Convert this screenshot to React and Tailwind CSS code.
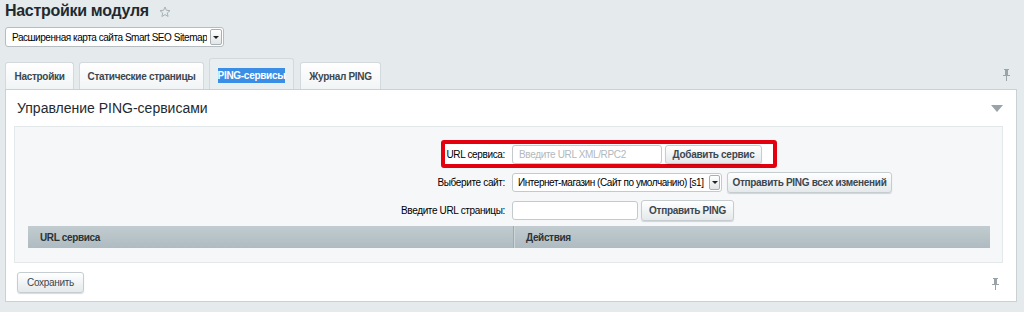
import React from "react";

const font = "font-['Liberation_Sans',Arial,sans-serif]";

function Btn({ children, className = "" }) {
  return (
    <button
      className={`flex items-center justify-center rounded-[3px] border border-[#c6cdd1] bg-gradient-to-b from-white to-[#e4e9eb] text-[10px] font-bold tracking-[-0.3px] text-[#3c474f] shadow-[0_1px_1px_rgba(0,0,0,0.15)] ${className}`}
    >
      {children}
    </button>
  );
}

function Arrow({ className = "" }) {
  return (
    <span
      className={`flex shrink-0 items-center justify-center rounded-[2px] border border-[#a8b0b4] bg-gradient-to-b from-white to-[#e2e6e8] ${className}`}
    >
      <svg width="6" height="3" viewBox="0 0 6 3">
        <path d="M0 0h6L3 3z" fill="#222" />
      </svg>
    </span>
  );
}

function Tab({ children, active, className = "" }) {
  return (
    <div
      className={`flex items-center justify-center rounded-t-[3px] border border-b-0 border-[#d3d9dc] text-[10px] font-bold tracking-[-0.3px] text-[#3c474f] ${
        active ? "h-[31px] bg-[#e9eef0] pt-[2px]" : "h-[27px] bg-gradient-to-b from-white to-[#f1f4f5]"
      } ${className}`}
    >
      {children}
    </div>
  );
}

export default function App() {
  return (
    <div className={`relative h-[312px] w-[1024px] overflow-hidden whitespace-nowrap bg-[#e5ebed] ${font}`}>
      <div className="flex h-[22px] items-center gap-[10px] pl-[5px]">
        <h1 className="text-[16px] font-bold leading-none tracking-[-0.3px] text-[#1f2a30]">Настройки модуля</h1>
        <svg width="12" height="12" viewBox="0 0 24 24" className="mt-[2px]">
          <path
            d="M12 2l2.9 6.6 7.1.6-5.4 4.7 1.6 7L12 17.3 5.8 21l1.6-7L2 9.2l7.1-.6z"
            fill="none"
            stroke="#a9b1b5"
            strokeWidth="2"
            strokeLinejoin="round"
          />
        </svg>
      </div>

      <div className="ml-[5px] mt-[5px] flex h-[20px] w-[219px] items-center justify-between rounded-[3px] border border-[#b5bdc1] bg-white pl-[6px] pr-[1px] text-[10px] tracking-[-0.45px] text-black">
        <span className="overflow-hidden">Расширенная карта сайта Smart SEO Sitemap</span>
        <Arrow className="ml-[2px] h-[16px] w-[12px]" />
      </div>

      <div className="mt-[11px] flex items-end pl-[5px] pr-[14px]">
        <Tab className="w-[69px]">Настройки</Tab>
        <Tab className="ml-[5px] w-[125px]">Статические страницы</Tab>
        <Tab active className="ml-[5px] w-[85px]">
          <span className="bg-[#3a8ee6] text-white">PING-сервисы</span>
        </Tab>
        <Tab className="ml-[6px] w-[81px]">Журнал PING</Tab>
        <div className="mb-[8px] ml-auto">
          <svg width="7" height="12" viewBox="0 0 7 12">
            <path d="M1 0h5v1H5v5h2v1H4v5H3V7H0V6h2V1H1z" fill="#9aa3a8" />
          </svg>
        </div>
      </div>

      <div className="ml-[5px] flex h-[213px] w-[1012px] flex-col border border-[#c9d1d4] bg-white">
        <div className="flex h-[36px] items-center justify-between pl-[11px] pr-[13px]">
          <span className="text-[14px] text-[#1f2a30]">Управление PING-сервисами</span>
          <svg width="12" height="7" viewBox="0 0 12 7">
            <path d="M0 0h12L6 7z" fill="#9aa3a8" />
          </svg>
        </div>

        <div className="ml-[8px] mr-[13px] flex h-[137px] flex-col border border-[#e3e8ea] bg-[#f5f7f8] pt-[13px] text-[10px] tracking-[-0.35px] text-black">
          <div className="relative flex h-[28px] items-center">
            <div className="absolute left-[426px] top-0 h-[28px] w-[336px] rounded-[3px] border-[4px] border-[#e3000f] bg-white" />
            <span className="relative w-[491px] pr-[1px] text-right">URL сервиса:</span>
            <div className="relative ml-[6px] flex h-[19px] w-[150px] items-center rounded-[3px] border border-[#c3cacd] bg-white pl-[6px] text-[#b3b9bc]">
              Введите URL XML/RPC2
            </div>
            <Btn className="relative ml-[3px] h-[19px] w-[97px]">Добавить сервис</Btn>
          </div>

          <div className="flex h-[28px] items-center">
            <span className="w-[491px] pr-[1px] text-right">Выберите сайт:</span>
            <div className="ml-[6px] flex h-[19px] w-[210px] items-center justify-between rounded-[3px] border border-[#c3cacd] bg-white pl-[5px] pr-[1px]">
              <span className="overflow-hidden tracking-[-0.45px]">Интернет-магазин (Сайт по умолчанию) [s1]</span>
              <Arrow className="ml-[2px] h-[15px] w-[11px]" />
            </div>
            <Btn className="ml-[5px] h-[21px] w-[165px]">Отправить PING всех изменений</Btn>
          </div>

          <div className="flex h-[28px] items-center">
            <span className="w-[491px] pr-[1px] text-right">Введите URL страницы:</span>
            <div className="ml-[6px] h-[19px] w-[126px] rounded-[3px] border border-[#c3cacd] bg-white" />
            <Btn className="ml-[3px] h-[21px] w-[93px]">Отправить PING</Btn>
          </div>

          <div className="ml-[13px] mr-[12px] mt-[2px] flex h-[22px] bg-gradient-to-b from-[#c2ccd0] to-[#aebbc0] font-bold text-[#2b3338]">
            <div className="flex w-[486px] items-center border-r border-[#9eabb0] pl-[12px]">URL сервиса</div>
            <div className="flex items-center border-l border-[#ccd5d8] pl-[11px]">Действия</div>
          </div>
        </div>

        <div className="flex flex-1 items-center justify-between pl-[11px] pr-[17px]">
          <Btn className="h-[21px] w-[67px] font-normal">Сохранить</Btn>
          <svg width="7" height="12" viewBox="0 0 7 12" className="mt-[4px]">
            <path d="M1 0h5v1H5v5h2v1H4v5H3V7H0V6h2V1H1z" fill="#9aa3a8" />
          </svg>
        </div>
      </div>
    </div>
  );
}
